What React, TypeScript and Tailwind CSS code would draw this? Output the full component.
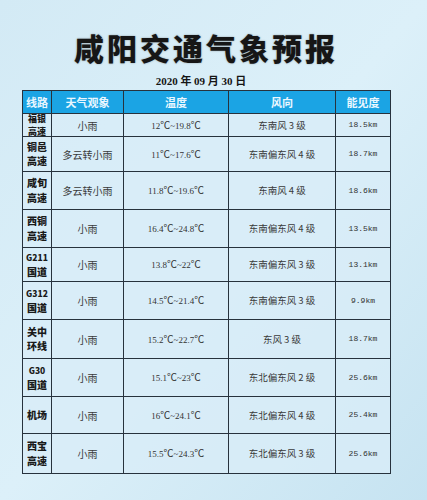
const rows = [
  { road: ["福银", "高速"], weather: "小雨", temp: "12℃~19.8℃", wind: "东南风 3 级", vis: "18.5km", h: "h-[23px]", tight: true },
  { road: ["铜邑", "高速"], weather: "多云转小雨", temp: "11℃~17.6℃", wind: "东南偏东风 4 级", vis: "18.7km", h: "h-[35px]" },
  { road: ["咸旬", "高速"], weather: "多云转小雨", temp: "11.8℃~19.6℃", wind: "东南风 4 级", vis: "18.6km", h: "h-[38px]" },
  { road: ["西铜", "高速"], weather: "小雨", temp: "16.4℃~24.8℃", wind: "东南偏东风 4 级", vis: "13.5km", h: "h-[38px]" },
  { road: ["G211", "国道"], weather: "小雨", temp: "13.8℃~22℃", wind: "东南偏东风 3 级", vis: "13.1km", h: "h-[34px]" },
  { road: ["G312", "国道"], weather: "小雨", temp: "14.5℃~21.4℃", wind: "东南偏东风 3 级", vis: "9.9km", h: "h-[38px]" },
  { road: ["关中", "环线"], weather: "小雨", temp: "15.2℃~22.7℃", wind: "东风 3 级", vis: "18.7km", h: "h-[39px]" },
  { road: ["G30", "国道"], weather: "小雨", temp: "15.1℃~23℃", wind: "东北偏东风 2 级", vis: "25.6km", h: "h-[38px]" },
  { road: ["机场"], weather: "小雨", temp: "16℃~24.1℃", wind: "东北偏东风 4 级", vis: "25.4km", h: "h-[37px]" },
  { road: ["西宝", "高速"], weather: "小雨", temp: "15.5℃~24.3℃", wind: "东北偏东风 3 级", vis: "25.6km", h: "h-[40px]" },
];

const cjk = "font-['Noto_Sans_CJK_SC',sans-serif]";
const serif = "font-['Liberation_Serif','Noto_Sans_CJK_SC',serif]";
const cell = "border border-[#27323d] text-center align-middle p-0";

// the degree sign needs the CJK face, Liberation draws it too small
function Temp({ value }: { value: string }) {
  const parts = value.split("℃");
  return (
    <>
      {parts.map((p, i) => (
        <span key={i}>
          {p}
          {i < parts.length - 1 ? <span className={`${cjk} text-[10px]`}>℃</span> : null}
        </span>
      ))}
    </>
  );
}

export default function App() {
  return (
    <div className="h-[500px] w-[427px] overflow-hidden bg-gradient-to-br from-[#d3eaf5] via-[#dcf0f9] to-[#c6e3f1]">
      <div className="ml-[22px] w-[368px] pt-[30px]">
        <h1 className={`${cjk} text-center text-[30px] font-black leading-[34px] tracking-[3px] text-[#161616] [text-shadow:0_0_2px_rgba(0,0,0,0.35)]`}>
          咸阳交通气象预报
        </h1>
        <p className={`${serif} mt-[10px] mr-[10px] text-center text-[11px] font-bold leading-[14px] text-[#151515]`}>
          2020 年 09 月 30 日
        </p>
        <table className="mt-[2px] w-[368px] table-fixed border-collapse border-[1.5px] border-[#27323d]">
          <colgroup>
            <col className="w-[29px]" />
            <col className="w-[72px]" />
            <col className="w-[105px]" />
            <col className="w-[107px]" />
            <col className="w-[55px]" />
          </colgroup>
          <thead>
            <tr className={`h-[23px] bg-[#1ba4e4] ${cjk} text-[11px] font-bold text-[#eaf7ff]`}>
              <th className={cell}>线路</th>
              <th className={cell}>天气观象</th>
              <th className={cell}>温度</th>
              <th className={cell}>风向</th>
              <th className={cell}>能见度</th>
            </tr>
          </thead>
          <tbody>
            {rows.map((r) => (
              <tr key={r.road.join("")} className={`${r.h} bg-[#d8ecf7]/80`}>
                <td
                  className={`${cell} ${cjk} font-black text-[#1a1a1a] ${
                    r.tight ? "text-[9px] leading-[13px]" : "text-[10px] leading-[14.5px]"
                  }`}
                >
                  <div className="flex h-[21px] flex-col items-center justify-center overflow-visible">
                    {r.road.map((t) => (
                      <div key={t} className={t.startsWith("G") ? "text-[8.5px]" : ""}>
                        {t}
                      </div>
                    ))}
                  </div>
                </td>
                <td className={`${cell} ${cjk} text-[10px] text-[#3a3a3a]`}>{r.weather}</td>
                <td className={`${cell} ${serif} text-[9px] text-[#333]`}>
                  <Temp value={r.temp} />
                </td>
                <td className={`${cell} ${cjk} text-[9.5px] text-[#3a3a3a]`}>{r.wind}</td>
                <td className={`${cell} font-['Liberation_Mono',monospace] text-[8px] text-[#333]`}>{r.vis}</td>
              </tr>
            ))}
          </tbody>
        </table>
      </div>
    </div>
  );
}
